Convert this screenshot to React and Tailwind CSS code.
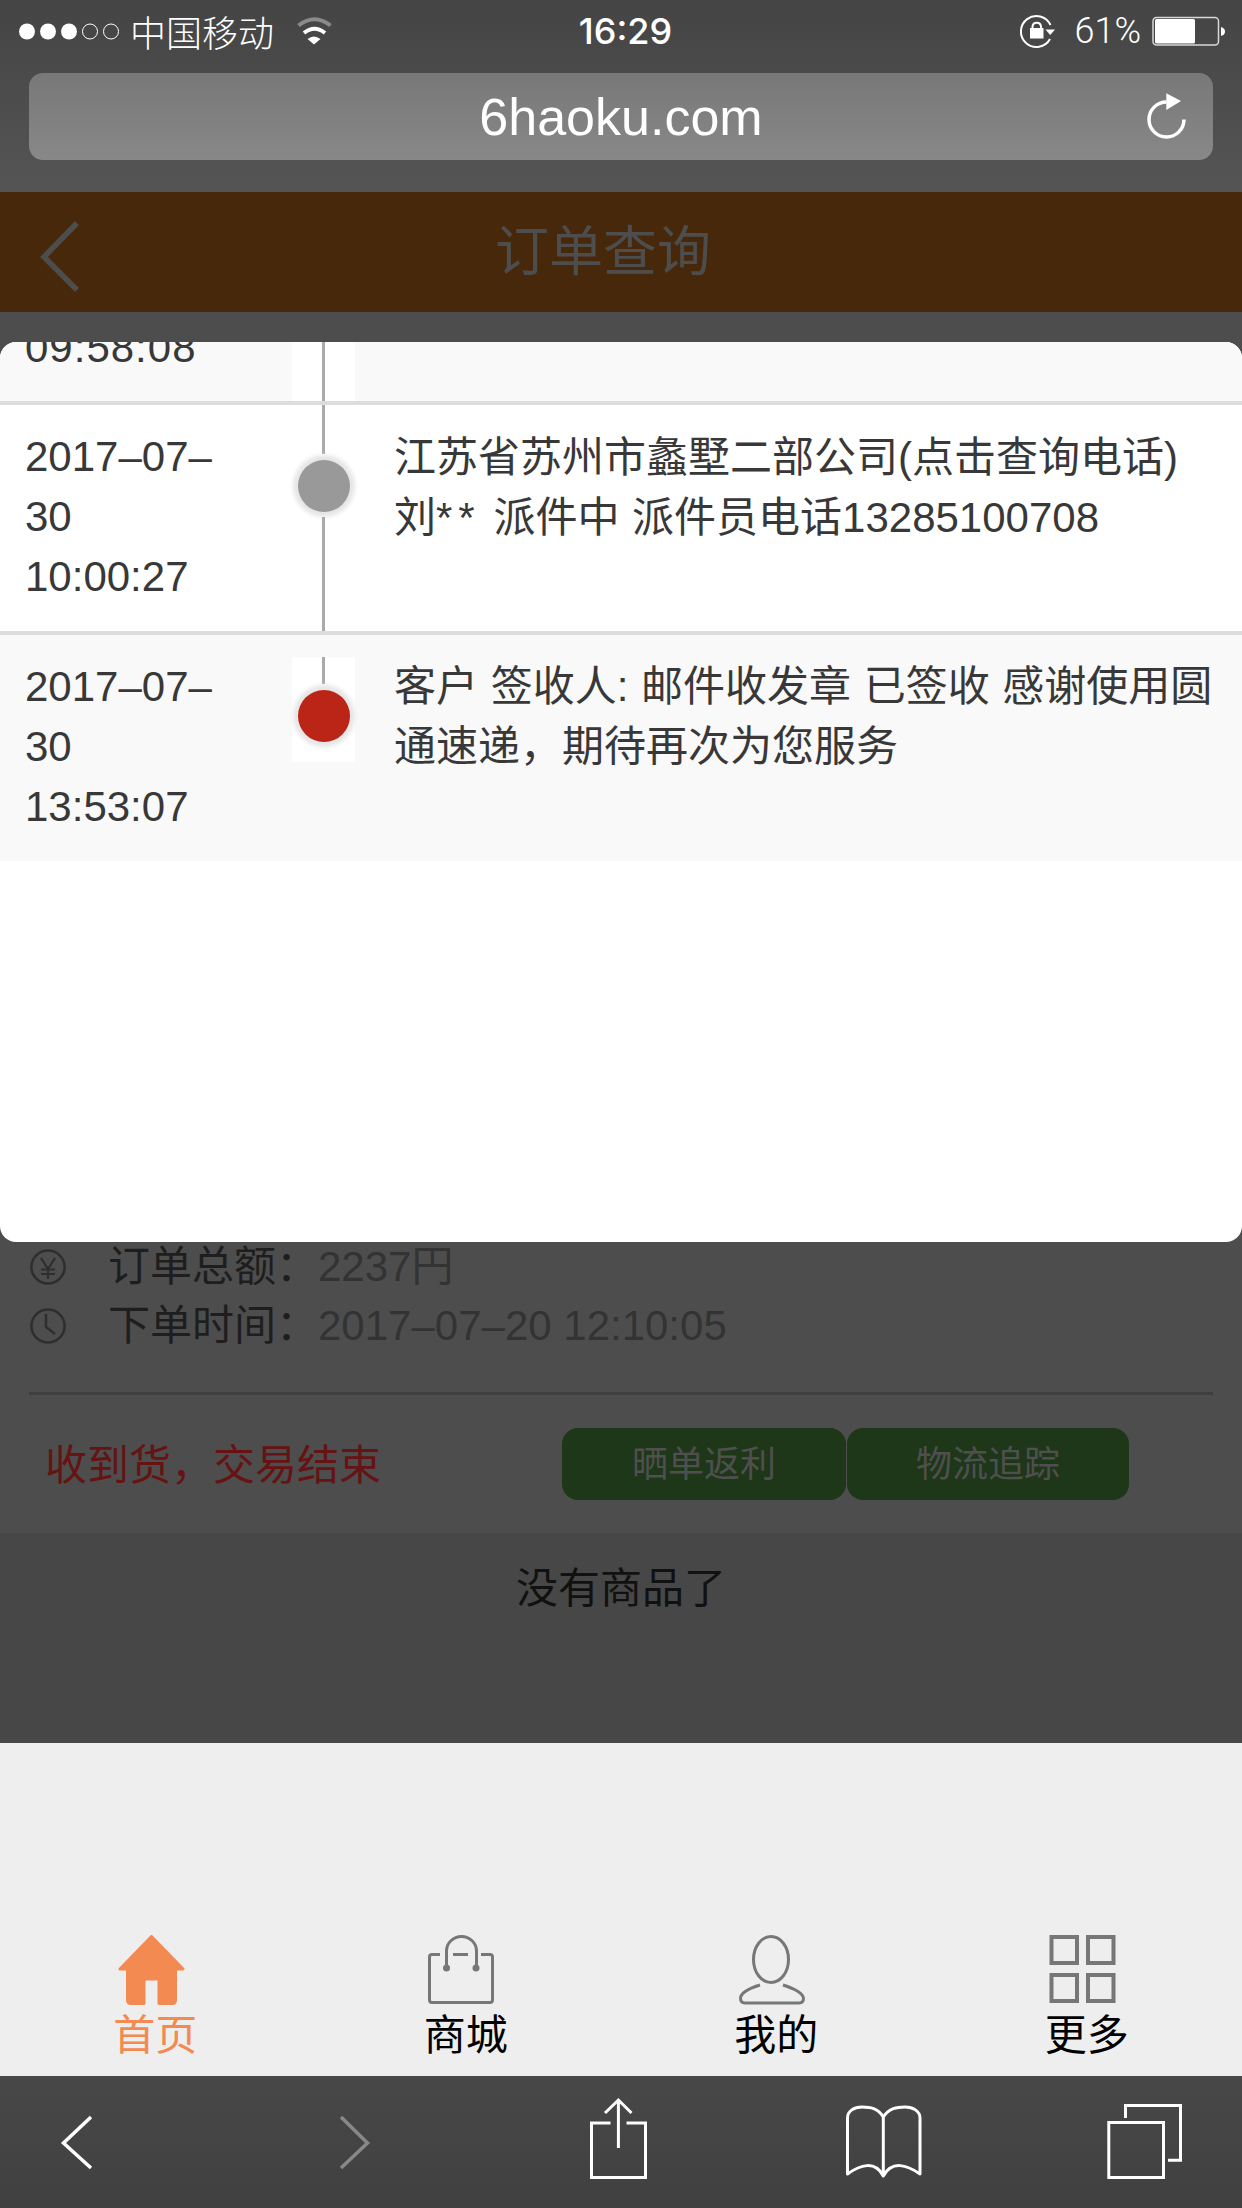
const Wifi = () => (
  <svg width="40" height="32" viewBox="292 14 40 32" className="ml-[20px]" fill="none">
    <path d="M296.5 24.5 Q312.5 12 328.5 24.5" stroke="#8a8a8a" strokeWidth="4" />
    <path d="M302 32 Q312.5 23.5 323 32" stroke="#fff" strokeWidth="4" />
    <path d="M305.5 38 Q312 33 318.5 38 L312 43.5 Z" fill="#fff" />
  </svg>
);

const Dots = () => (
  <svg width="104" height="24" viewBox="18 18 104 24" fill="none">
    <circle cx="27" cy="30.5" r="8" fill="#fff" />
    <circle cx="48" cy="30.5" r="8" fill="#fff" />
    <circle cx="69" cy="30.5" r="8" fill="#fff" />
    <circle cx="90" cy="30.5" r="7.5" stroke="#fff" strokeWidth="1" />
    <circle cx="111" cy="30.5" r="7.5" stroke="#fff" strokeWidth="1" />
  </svg>
);

const RotationLock = () => (
  <svg width="38" height="38" viewBox="1020 11 38 38" fill="none">
    <path d="M1051.5 24 A15.5 15.5 0 1 0 1051 38" stroke="#fff" strokeWidth="2" />
    <path d="M1046.5 28.5 H1056 L1051.2 34 Z" fill="#fff" />
    <rect x="1031" y="27" width="13.5" height="10.5" fill="#fff" />
    <path d="M1033.5 27 V25.5 A4.3 4.3 0 0 1 1042 25.5 V27" stroke="#fff" strokeWidth="2" />
  </svg>
);

const Battery = () => (
  <svg width="76" height="32" viewBox="1151 14 76 32" className="ml-[10px]" fill="none">
    <rect x="1153" y="16.5" width="65.5" height="27.5" rx="3.5" stroke="#d8d8d8" strokeWidth="1.5" />
    <rect x="1155" y="18" width="40" height="24.5" rx="1.5" fill="#fff" />
    <path d="M1221 26 Q1225 27 1225 30.5 Q1225 34 1221 35 Z" fill="#fff" />
  </svg>
);

const Refresh = () => (
  <svg width="44" height="52" viewBox="1146 90 44 52" fill="none" className="absolute right-[24px] top-[17px]">
    <path d="M1185 119.5 A17.5 17.5 0 1 1 1167.5 102" stroke="#fff" strokeWidth="3.5" />
    <path d="M1167.3 93.3 L1182 101 L1167.3 110 Z" fill="#fff" />
  </svg>
);

const HeaderBack = () => (
  <svg width="44" height="120" viewBox="38 192 44 120" className="ml-[38px]" fill="none">
    <path d="M77 223 L44 257 L77 290" stroke="#4d4d4d" strokeWidth="5.5" strokeLinejoin="miter" />
  </svg>
);

const Yen = () => (
  <svg width="36" height="36" viewBox="30 1250 36 36" fill="none" stroke="#2e2e2e" strokeWidth="2.5">
    <circle cx="48" cy="1268" r="16.6" />
    <path d="M41 1259 L48 1270 L55 1259 M48 1270 V1280 M41 1270.5 H55 M41 1275 H55" strokeWidth="2.2" />
  </svg>
);

const Clock = () => (
  <svg width="36" height="36" viewBox="30 1309 36 36" fill="none" stroke="#2e2e2e" strokeWidth="2.5">
    <circle cx="48" cy="1327" r="16.6" />
    <path d="M46 1315 V1328 L55 1335" />
  </svg>
);

const HomeIcon = () => (
  <svg width="75" height="70" viewBox="0 0 75 70" className="shrink-0">
    <path
      d="M33.5 1.5 L65 34 H57.5 V65 Q57.5 68.5 54 68.5 H41 V44 H26 V68.5 H13 Q9.5 68.5 9.5 65 V34 H2 Z"
      fill="#f28a52"
      stroke="#f28a52"
      strokeWidth="3"
      strokeLinejoin="round"
    />
  </svg>
);

const BagIcon = () => (
  <svg width="75" height="70" viewBox="0 0 75 70" fill="none" stroke="#777" strokeWidth="3" className="shrink-0">
    <path d="M12 19.5 H4 Q1.5 19.5 1.5 22 V65 Q1.5 67.5 4 67.5 H62 Q64.5 67.5 64.5 65 V22 Q64.5 19.5 62 19.5 H53" />
    <path d="M25 19.5 H40" />
    <path d="M18.5 33 V16 A15 14.5 0 0 1 48.5 16 V33" />
    <circle cx="18.5" cy="33" r="3.5" fill="#777" stroke="none" />
    <circle cx="48" cy="33" r="3.5" fill="#777" stroke="none" />
  </svg>
);

const PersonIcon = () => (
  <svg width="75" height="70" viewBox="0 0 75 70" fill="none" stroke="#777" strokeWidth="3" className="shrink-0">
    <ellipse cx="32" cy="24.5" rx="17.5" ry="23" />
    <path d="M21 50 Q2 56 1.5 63 Q1.5 68 6 68 H60 Q64.5 68 64.5 63 Q63 56 44 50" />
  </svg>
);

const GridIcon = () => (
  <svg width="75" height="70" viewBox="1 0 75 70" fill="none" stroke="#777" strokeWidth="4" className="shrink-0">
    <rect x="3.5" y="2" width="25.5" height="26" />
    <rect x="40" y="2" width="25.5" height="26" />
    <rect x="3.5" y="40" width="25.5" height="26" />
    <rect x="40" y="40" width="25.5" height="26" />
  </svg>
);

const Tab = ({ icon, label, active }) => (
  <div className="flex flex-col items-center">
    {icon}
    <span className={`mt-[2px] text-[42px] leading-[58px] ${active ? "text-[#f28a52]" : "text-black"}`}>{label}</span>
  </div>
);

const Dot = ({ color }) => (
  <div className="flex h-[63px] w-[63px] shrink-0 items-center justify-center">
    <div className={`h-[52px] w-[52px] rounded-full shadow-[0_0_4px_5px_#e6e6e6] ${color}`} />
  </div>
);

const Time = ({ lines, className = "" }) => (
  <div className={`w-[292px] shrink-0 pl-[25px] ${className}`}>
    {lines.map((l) => (
      <div key={l}>{l}</div>
    ))}
  </div>
);

export default function App() {
  return (
    <div className="relative flex h-[2208px] w-[1242px] flex-col overflow-hidden bg-[#eee] font-['Liberation_Sans','Noto_Sans_CJK_SC',sans-serif]">
      {/* browser top */}
      <div className="h-[192px] shrink-0 bg-gradient-to-b from-[#444] to-[#555]">
        <div className="grid h-[62px] grid-cols-3 items-center text-[36px] leading-none text-white">
          <div className="flex items-center whitespace-nowrap pl-[18px]">
            <Dots />
            <span className="ml-[8px] font-['Noto_Sans_CJK_SC',sans-serif] font-light">中国移动</span>
            <Wifi />
          </div>
          <div className="pl-[9px] text-center font-['Inter',sans-serif] font-medium">16:29</div>
          <div className="flex items-center justify-end pr-[15px]">
            <RotationLock />
            <span className="ml-[17px] font-['Roboto',sans-serif] font-light">61%</span>
            <Battery />
          </div>
        </div>
        <div className="relative mx-[29px] mt-[11px] flex h-[87px] items-center justify-center rounded-[14px] bg-gradient-to-b from-[#787878] to-[#888] text-[52px] leading-none text-white">
          6haoku.com
          <Refresh />
        </div>
      </div>

      {/* page header */}
      <div className="flex h-[120px] shrink-0 items-center bg-[#47280b]">
        <HeaderBack />
        <span className="ml-[413px] text-[54px] leading-none text-[#4d4d4d]">订单查询</span>
      </div>

      {/* order card behind the dialog */}
      <div className="flex h-[1221px] shrink-0 flex-col justify-end bg-[#4d4d4d] pb-[33px]">
        <div className="flex h-[59px] items-center pl-[30px] text-[42px] text-[#1e1e1e]">
          <Yen />
          <span className="ml-[42px]">订单总额：</span>
          <span className="text-[#333]">2237円</span>
        </div>
        <div className="flex h-[59px] items-center pl-[30px] text-[42px] text-[#1e1e1e]">
          <Clock />
          <span className="ml-[42px]">下单时间：</span>
          <span className="text-[#333]">2017–07–20 12:10:05</span>
        </div>
        <div className="mx-[29px] mt-[37px] h-[3px] bg-[#3f3f3f]" />
        <div className="mt-[33px] flex h-[72px] items-center pl-[45px]">
          <span className="w-[517px] pt-[2px] text-[42px] text-[#651313]">收到货，交易结束</span>
          <div className="flex h-full w-[284px] items-center justify-center rounded-[16px] bg-[#1e3719] pt-[2px] text-[36px] text-[#4f4f4f]">晒单返利</div>
          <div className="ml-[1px] flex h-full w-[282px] items-center justify-center rounded-[16px] bg-[#1e3719] pt-[2px] text-[36px] text-[#4f4f4f]">物流追踪</div>
        </div>
      </div>

      <div className="h-[210px] shrink-0 bg-[#474747] pt-[26px] text-center text-[42px] leading-[60px] text-[#111]">
        没有商品了
      </div>

      {/* site tab bar */}
      <div className="flex flex-1 items-end bg-[#eee] pb-[11px]">
        <div className="grid w-full grid-cols-4">
          <Tab icon={<HomeIcon />} label="首页" active />
          <Tab icon={<BagIcon />} label="商城" />
          <Tab icon={<PersonIcon />} label="我的" />
          <Tab icon={<GridIcon />} label="更多" />
        </div>
      </div>

      {/* browser toolbar */}
      <div className="flex h-[132px] shrink-0 bg-gradient-to-b from-[#484848] to-[#404040]">
        <svg width="38" height="132" viewBox="58 2076 38 132" className="ml-[58px]" fill="none">
          <path d="M91 2117 L63.5 2143 L91 2168" stroke="#fff" strokeWidth="3.5" />
        </svg>
        <svg width="37" height="132" viewBox="336 2076 37 132" className="ml-[240px]" fill="none">
          <path d="M341 2117 L367.5 2143 L341 2168" stroke="#888" strokeWidth="3.5" />
        </svg>
        <svg width="62" height="132" viewBox="588 2076 62 132" className="ml-[215px]" fill="none" stroke="#fff" strokeWidth="3">
          <path d="M610.5 2123 H591.5 V2177.5 H645.5 V2123 H626.5" />
          <path d="M618.4 2100 V2148" />
          <path d="M605 2113 L618.4 2100 L631.5 2113" />
        </svg>
        <svg width="78" height="132" viewBox="845 2076 78 132" className="ml-[195px]" fill="none" stroke="#fff" strokeWidth="3" strokeLinejoin="round">
          <path d="M883.3 2117 C878 2108 870 2107 862 2107 C854 2107 847.5 2111 847.5 2118 V2174 C860 2165 875 2160 883.3 2176 C892 2160 907 2165 920 2174 V2118 C920 2111 913 2107 905 2107 C897 2107 889 2108 883.3 2117 V2176" />
        </svg>
        <svg width="78" height="132" viewBox="1106 2076 78 132" className="ml-[183px]" fill="none" stroke="#fff" strokeWidth="3">
          <rect x="1108.8" y="2122.5" width="54.7" height="55" />
          <path d="M1125.5 2118 V2105.5 H1180.5 V2160.2 H1168" />
        </svg>
      </div>

      {/* dialog */}
      <div className="absolute left-0 top-[342px] h-[900px] w-full overflow-hidden rounded-[16px] bg-white text-[42px] leading-[60px] text-[#383838] [word-spacing:1px]">
        <div className="flex h-[59px] bg-[#f9f9f9]">
          <Time lines={["09:58:08"]} className="-mt-[24px] tracking-[1px]" />
          <div className="flex w-[63px] shrink-0 justify-center bg-white">
            <div className="w-[3px] bg-[#aaa]" />
          </div>
        </div>

        <div className="flex h-[230px] border-t-4 border-[#ddd] bg-white">
          <Time lines={["2017–07–", "30", "10:00:27"]} className="pt-[22px]" />
          <div className="flex w-[63px] shrink-0 flex-col items-center">
            <div className="h-[49px] w-[3px] bg-[#aaa]" />
            <Dot color="bg-[#999]" />
            <div className="w-[3px] flex-1 bg-[#aaa]" />
          </div>
          <div className="ml-[39px] whitespace-nowrap pt-[23px]">
            江苏省苏州市蠡墅二部公司(点击查询电话)
            <br />
            刘<span className="tracking-[6px]">**</span> 派件中 派件员电话13285100708
          </div>
        </div>

        <div className="flex h-[230px] border-t-4 border-[#ddd] bg-[#f9f9f9]">
          <Time lines={["2017–07–", "30", "13:53:07"]} className="pt-[22px]" />
          <div className="mt-[22px] flex h-[105px] w-[63px] shrink-0 flex-col items-center bg-white">
            <div className="h-[27px] w-[3px] bg-[#aaa]" />
            <Dot color="bg-[#bb2517]" />
          </div>
          <div className="ml-[39px] whitespace-nowrap pt-[22px]">
            客户 签收人: 邮件收发章 已签收 感谢使用圆
            <br />
            通速递，期待再次为您服务
          </div>
        </div>
      </div>
    </div>
  );
}
